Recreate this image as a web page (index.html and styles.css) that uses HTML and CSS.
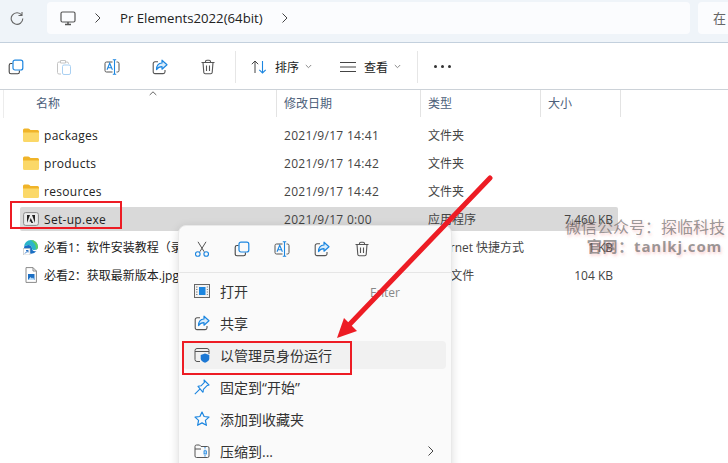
FILE: index.html
```html
<!DOCTYPE html>
<html lang="en">
<head>
    <meta charset="UTF-8">
    <meta name="viewport" content="width=device-width, initial-scale=1.0">
    <title>Pr Elements2022(64bit)</title>
    <link rel="stylesheet" href="styles.css">
</head>
<body>
    <svg class="defs" width="0" height="0">
        <symbol id="i-copy" viewBox="0 0 16 16">
            <path d="M4.500 4.500H3a1.800 1.800 0 0 0-1.800 1.800V13A1.800 1.800 0 0 0 3 14.800h6.600a1.800 1.800 0 0 0 1.800-1.800v-1.500" fill="none" stroke="#444" stroke-width="1.100"/>
            <rect x="5" y="1.200" width="9.800" height="9.800" rx="2" fill="none" stroke="#1c86e0" stroke-width="1.200"/>
        </symbol>
        <symbol id="i-rename" viewBox="0 0 16 16">
            <path d="M8.500 3H2.500A1.500 1.500 0 0 0 1 4.500v7A1.500 1.500 0 0 0 2.500 13H8.500M12.500 3h1A1.500 1.500 0 0 1 15 4.500v7a1.500 1.500 0 0 1-1.500 1.500h-1" fill="none" stroke="#555" stroke-width="1"/>
            <path d="M10.500 .7v14.600M8.800 .7h3.400M8.800 15.300h3.400M3 10.800l2.700-6.600 2.700 6.600M3.900 8.800h3.600" fill="none" stroke="#1c86e0" stroke-width="1.100"/>
        </symbol>
        <symbol id="i-share" viewBox="0 0 16 16">
            <path d="M6 2.800H3A1.800 1.800 0 0 0 1.200 4.600v8.200A1.800 1.800 0 0 0 3 14.600h8.200a1.800 1.800 0 0 0 1.800-1.800V11" fill="none" stroke="#555" stroke-width="1.100"/>
            <path d="M10 1.200l5 4.500-5 4.500V7.600c-2.600 0-4.300 1-5.500 3 0-3.800 2.200-6.400 5.500-6.600z" fill="#d8ecfb" stroke="#1c86e0" stroke-width="1.200" stroke-linejoin="round"/>
        </symbol>
        <symbol id="i-delete" viewBox="0 0 16 16">
            <path d="M1.500 3.500h13M5.500 3.500V2.600A1.400 1.400 0 0 1 6.900 1.200h2.200a1.400 1.400 0 0 1 1.400 1.400v.9M3 3.500l.8 10a1.500 1.500 0 0 0 1.500 1.300h5.400a1.500 1.500 0 0 0 1.500-1.300l.8-10M6.500 6.500v5.500M9.500 6.500v5.500" fill="none" stroke="#555" stroke-width="1.100"/>
        </symbol>
        <symbol id="i-folder" viewBox="0 0 16 14">
            <path d="M0 2a1.500 1.500 0 0 1 1.500-1.500h3.700c.5 0 .9.200 1.200.5L7.500 2H14.500A1.500 1.500 0 0 1 16 3.500V5H0z" fill="#f0b429"/>
            <path d="M0 4.500h16v8A1.500 1.500 0 0 1 14.500 14h-13A1.500 1.500 0 0 1 0 12.500z" fill="#fbd868"/>
        </symbol>
        <symbol id="i-chev" viewBox="0 0 8 12">
            <path d="M1.500 1.500L6 6l-4.500 4.500" fill="none" stroke="#444" stroke-width="1"/>
        </symbol>
    </svg>

    <div class="topbar">
        <svg class="refresh" width="14" height="14" viewBox="0 0 14 14"><path d="M11.800 4.300A5.800 5.800 0 1 0 12.800 7.500M12 1v3.500H8.500" fill="none" stroke="#666" stroke-width="1.100"/></svg>
        <div class="address">
            <svg width="16" height="15" viewBox="0 0 16 15"><rect x="1" y="1" width="14" height="10" rx="1.500" fill="none" stroke="#555" stroke-width="1.200"/><path d="M5 13.500h6M8 11v2.500" stroke="#555" stroke-width="1.500"/></svg>
            <svg class="crumb-sep" width="8" height="12"><use href="#i-chev"/></svg>
            <span class="crumb">Pr Elements2022(64bit)</span>
            <svg class="crumb-sep" width="8" height="12"><use href="#i-chev"/></svg>
        </div>
        <div class="search">在</div>
    </div>

    <div class="toolbar">
        <svg class="tool" width="16" height="16"><use href="#i-copy"/></svg>
        <svg class="tool paste" width="16" height="16" viewBox="0 0 16 16"><path d="M4 3H3a1.500 1.500 0 0 0-1.500 1.500v9A1.500 1.500 0 0 0 3 15h2M10 3h1a1.500 1.500 0 0 1 1.500 1.500V5M4.500 1.500h5V4h-5z" fill="none" stroke="#c4c4c4" stroke-width="1"/><rect x="6.500" y="6" width="8" height="9.500" rx="1.500" fill="none" stroke="#a9d0f2" stroke-width="1"/></svg>
        <svg class="tool" width="16" height="16"><use href="#i-rename"/></svg>
        <svg class="tool" width="16" height="16"><use href="#i-share"/></svg>
        <svg class="tool" width="16" height="16"><use href="#i-delete"/></svg>
        <span class="tool-sep"></span>
        <div class="tool-text sort">
            <svg width="16" height="14" viewBox="0 0 16 14"><path d="M4 13V1M.8 4.200L4 1l3.200 3.200" fill="none" stroke="#444" stroke-width="1"/><path d="M11.500 1v12M8.300 9.800l3.200 3.200 3.200-3.200" fill="none" stroke="#1c86e0" stroke-width="1.100"/></svg>
            <span>排序</span>
            <svg class="caret" width="7" height="5" viewBox="0 0 7 5"><path d="M.8 1l2.700 2.700L6.200 1" fill="none" stroke="#888"/></svg>
        </div>
        <div class="tool-text view">
            <svg width="16" height="10" viewBox="0 0 16 10"><path d="M0 .5h16M0 5h16M0 9.500h16" stroke="#444"/></svg>
            <span>查看</span>
            <svg class="caret" width="7" height="5" viewBox="0 0 7 5"><path d="M.8 1l2.700 2.700L6.200 1" fill="none" stroke="#888"/></svg>
        </div>
        <span class="tool-sep after-view"></span>
        <div class="more"><i></i><i></i><i></i></div>
    </div>

    <div class="list-head">
        <svg class="sort-up" width="8" height="5" viewBox="0 0 8 5"><path d="M.7 4L4 .8 7.300 4" fill="none" stroke="#666"/></svg>
        <div class="col col-name">名称</div>
        <div class="col col-date">修改日期</div>
        <div class="col col-type">类型</div>
        <div class="col col-size">大小</div>
    </div>

    <div class="rows">
        <div class="row">
            <div class="name latin"><svg class="file-icon" width="16" height="14"><use href="#i-folder"/></svg>packages</div>
            <div class="latin">2021/9/17 14:41</div><div>文件夹</div><div class="size"></div>
        </div>
        <div class="row">
            <div class="name latin"><svg class="file-icon" width="16" height="14"><use href="#i-folder"/></svg>products</div>
            <div class="latin">2021/9/17 14:42</div><div>文件夹</div><div class="size"></div>
        </div>
        <div class="row">
            <div class="name latin"><svg class="file-icon" width="16" height="14"><use href="#i-folder"/></svg>resources</div>
            <div class="latin">2021/9/17 14:42</div><div>文件夹</div><div class="size"></div>
        </div>
        <div class="row selected">
            <div class="name latin"><svg class="file-icon" width="16" height="14" viewBox="0 0 16 14"><rect x=".6" y=".6" width="14.800" height="12.800" rx="2" fill="#ececec" stroke="#8a8a8a"/><path d="M4 3H7L4 11zM9 3H12V11zM7.700 6L10.200 11H8.400L7.700 9.400H6.500z" fill="#222"/></svg>Set-up.exe</div>
            <div class="latin">2021/9/17 0:00</div><div>应用程序</div><div class="size">7,460 KB</div>
        </div>
        <div class="row">
            <div class="name"><svg class="file-icon" width="16" height="16" viewBox="0 0 16 16"><path d="M1 8a7 7 0 0 1 14 0c0 2-1.500 3-3.500 3-1.500 0-2.500-.5-2.500-1.500 0-2.500-2-3.500-3.500-3.500C3.500 6 1.500 7 1 8z" fill="#2bb5c9"/><path d="M1 8c.5-1 2.500-2 4.500-2 1.500 0 3.500 1 3.500 3.500 0 2 2 3.500 4.500 2.500A7 7 0 0 1 1 8z" fill="#1a6fc4"/><path d="M8 1a7 7 0 0 1 7 7c0 1.500-1 2.500-2.500 2.800C14 7 11 3.500 8 1z" fill="#5fce5f"/><rect x=".5" y="9.500" width="6.500" height="6.500" fill="#fff" stroke="#bbb" stroke-width=".6"/><path d="M2 14.500l3-3M3 11.500h2v2" fill="none" stroke="#1565c0" stroke-width=".9"/></svg>必看1&#xFF1A;软件安装教程&#xFF08;录屏&#xFF09;.url</div>
            <div class="latin">2021/9/17 0:00</div><div>Internet 快捷方式</div><div class="size">1 KB</div>
        </div>
        <div class="row">
            <div class="name"><svg class="file-icon" width="16" height="16" viewBox="0 0 16 16"><path d="M3 .6h7l3.400 3.400v11.400H3z" fill="#fff" stroke="#8a8a8a"/><path d="M10 .6V4h3.400" fill="none" stroke="#8a8a8a"/><rect x="5" y="7" width="6.500" height="6" fill="#1c6fc4"/><path d="M5 13l2.500-3 1.500 1.500 1-1 1.500 2.500z" fill="#bfe0fa"/></svg>必看2&#xFF1A;获取最新版本.jpg</div>
            <div class="latin">2021/9/17 0:00</div><div>JPG 文件</div><div class="size">104 KB</div>
        </div>
    </div>

    <div class="menu">
        <div class="menu-tools">
            <svg width="16" height="16" viewBox="0 0 16 16"><path d="M4 .8l6.200 10M12 .8L5.800 10.800" fill="none" stroke="#555" stroke-width="1"/><circle cx="3.800" cy="13" r="2.300" fill="none" stroke="#1c86e0" stroke-width="1.100"/><circle cx="12.200" cy="13" r="2.300" fill="none" stroke="#1c86e0" stroke-width="1.100"/></svg>
            <svg width="16" height="16"><use href="#i-copy"/></svg>
            <svg width="16" height="16"><use href="#i-rename"/></svg>
            <svg width="16" height="16"><use href="#i-share"/></svg>
            <svg width="16" height="16"><use href="#i-delete"/></svg>
        </div>
        <div class="menu-items">
            <div class="item">
                <svg width="16" height="14" viewBox="0 0 16 14"><rect x=".5" y=".5" width="15" height="13" fill="#f3f3f3" stroke="#666"/><rect x="5" y="3" width="6.500" height="8" fill="#1c86e0"/><path d="M2 3h1.500M2 5.500h1.500M2 8h1.500M2 10.500h1.500M12.800 3h1.200M12.800 5.500h1.200M12.800 8h1.200M12.800 10.500h1.200" stroke="#888"/></svg>
                <span class="label">打开</span><span class="hint">Enter</span>
            </div>
            <div class="item">
                <svg width="16" height="16"><use href="#i-share"/></svg>
                <span class="label">共享</span>
            </div>
            <div class="item hover">
                <svg width="16" height="16" viewBox="0 0 16 16"><path d="M6 14.500H3a2 2 0 0 1-2-2V3.500a2 2 0 0 1 2-2h10a2 2 0 0 1 2 2V7M1 4.500h14" fill="none" stroke="#555" stroke-width="1"/><path d="M11 6.500l4.300 1.500v3.500c0 2-1.800 3.500-4.300 4.300-2.500-.8-4.300-2.300-4.300-4.300V8z" fill="#1c78d4"/></svg>
                <span class="label">以管理员身份运行</span>
            </div>
            <div class="item">
                <svg width="16" height="16" viewBox="0 0 16 16"><path d="M10 1l5 5-2.200.8-3.400 3.500-.4 3L4 7.300l3-.5 3.400-3.400zM5.800 10.200L.8 15.200" fill="none" stroke="#1c86e0" stroke-width="1.100" stroke-linejoin="round"/></svg>
                <span class="label">固定到“开始”</span>
            </div>
            <div class="item">
                <svg width="16" height="16" viewBox="0 0 16 16"><path d="M8 1l2.100 4.500 4.900.6-3.600 3.300 1 4.900L8 11.900l-4.400 2.400 1-4.900L1 6.100l4.900-.6z" fill="none" stroke="#1c86e0" stroke-width="1.200" stroke-linejoin="round"/></svg>
                <span class="label">添加到收藏夹</span>
            </div>
            <div class="item">
                <svg width="16" height="16" viewBox="0 0 16 16"><path d="M1 3.500A1.500 1.500 0 0 1 2.500 2h3L7 3.500h6.500A1.500 1.500 0 0 1 15 5v8a1.500 1.500 0 0 1-1.500 1.500h-11A1.500 1.500 0 0 1 1 13zM1 6h6" fill="none" stroke="#555" stroke-width="1"/><path d="M11 4v10.500" stroke="#1c86e0" stroke-width="1" stroke-dasharray="1.500 1.200"/><rect x="10" y="8" width="2.500" height="3" fill="none" stroke="#1c86e0" stroke-width=".8"/></svg>
                <span class="label">压缩到...</span>
                <svg class="item-chev" width="8" height="12"><use href="#i-chev"/></svg>
            </div>
        </div>
    </div>

    <div class="watermark">
        <div>微信公众号&#xFF1A;探临科技</div>
        <div class="site">官网&#xFF1A;tanlkj.com</div>
    </div>

    <div class="mark mark-file"></div>
    <div class="mark mark-admin"></div>
    <svg class="arrow" width="728" height="463" viewBox="0 0 728 463">
        <path d="M490 178L349 325" stroke="#ed1c24" stroke-width="5" stroke-linecap="round" fill="none"/>
        <path d="M337 338L344 318 357 331z" fill="#ed1c24"/>
    </svg>
</body>
</html>
```

FILE: styles.css
```css
html, body {
    margin: 0;
    height: 100%;
}
body {
    position: relative;
    width: 728px;
    height: 463px;
    overflow: hidden;
    background: #fff;
    font-family: "Open Sans", "Noto Sans CJK SC", sans-serif;
    font-size: 12px;
    color: #222;
}
.defs {
    position: absolute;
}
svg {
    display: block;
    flex: none;
}

.topbar {
    display: flex;
    align-items: flex-start;
    height: 43px;
    padding-top: 2px;
    box-sizing: border-box;
    background: #eff4f9;
    border-bottom: 1px solid #c3d0dd;
}
.refresh {
    margin: 9px 23px 0 10px;
}
.address {
    display: flex;
    align-items: center;
    width: 643px;
    height: 32px;
    padding-left: 13px;
    box-sizing: border-box;
    background: #fbfcfe;
    border-radius: 4px;
    flex: none;
}
.crumb-sep {
    margin-left: 18px;
    margin-right: 18px;
}
.crumb {
    font-size: 13.200px;
    color: #222;
}
.search {
    flex: none;
    width: 60px;
    height: 32px;
    margin-left: 8px;
    padding-left: 15px;
    box-sizing: border-box;
    background: #fbfcfe;
    border-radius: 4px;
    font-size: 13px;
    line-height: 32px;
    color: #666;
}

.toolbar {
    display: flex;
    align-items: center;
    height: 47px;
    padding-top: 1px;
    padding-left: 8px;
    box-sizing: border-box;
    border-bottom: 1px solid #ccd2d8;
}
.tool {
    margin-right: 32px;
}
.tool-sep {
    width: 1px;
    height: 32px;
    margin-left: -13px;
    background: #e6e6e6;
}
.tool-sep.after-view {
    margin-left: 16px;
}
.tool-text {
    display: flex;
    align-items: center;
    font-size: 12px;
}
.tool-text span {
    margin-left: 8px;
    margin-right: 6px;
}
.sort {
    margin-left: 15px;
}
.view {
    margin-left: 28px;
}
.more {
    display: flex;
    gap: 4px;
    margin-left: 16px;
}
.more i {
    width: 3px;
    height: 3px;
    border-radius: 50%;
    background: #333;
}

.list-head {
    position: relative;
    display: grid;
    grid-template-columns: 277px 144px 120px 80px;
    height: 28px;
}
.list-head::before {
    content: "";
    position: absolute;
    left: 3px;
    top: 0;
    bottom: 0;
    width: 1px;
    background: #ececec;
}
.sort-up {
    position: absolute;
    left: 149px;
    top: 1px;
}
.col {
    padding-top: 4px;
    box-sizing: border-box;
    color: #4c607a;
    border-right: 1px solid #e3e3e3;
    height: 27px;
    padding-left: 7px;
}
.col-name {
    padding-left: 36px;
}

.rows {
    display: flex;
    flex-direction: column;
    gap: 4px;
    margin: 5px 0 0 20px;
    width: 598px;
}
.row {
    display: grid;
    grid-template-columns: 264px 144px 120px 70px;
    align-items: center;
    height: 24px;
    border-radius: 2px;
    color: #444;
}
.row .name {
    display: flex;
    align-items: center;
    color: #222;
    white-space: nowrap;
    overflow: hidden;
}
.latin {
    letter-spacing: 0.3px;
}
.row.selected {
    background: #d9d9d9;
}
.file-icon {
    margin-left: 3px;
    margin-right: 5px;
}
.size {
    padding-right: 5px;
    text-align: right;
}

.menu {
    position: absolute;
    left: 178px;
    top: 225px;
    width: 274px;
    height: 260px;
    background: #fafafa;
    border: 1px solid #e9e9e9;
    border-radius: 8px;
    box-sizing: border-box;
    box-shadow: 0 2px 10px rgba(0, 0, 0, 0.14);
    color: #333;
}
.menu-tools {
    display: flex;
    align-items: center;
    gap: 24px;
    height: 46px;
    padding-left: 15px;
    border-bottom: 1px solid #e6e6e6;
}
.menu-items {
    display: flex;
    flex-direction: column;
    padding: 2px 5px 0 4px;
}
.item {
    display: flex;
    align-items: center;
    height: 28px;
    margin-top: 4.200px;
    padding-left: 11px;
    border-radius: 4px;
    font-size: 14px;
}
.item:first-child {
    margin-top: 1.500px;
}
.item.hover {
    background: #f1f1f1;
}
.label {
    margin-left: 10px;
}
.hint {
    margin-left: 122px;
    margin-top: 3px;
    font-size: 12px;
    color: #888;
}
.item-chev {
    margin-left: auto;
    margin-right: 11px;
}

.watermark {
    position: absolute;
    right: 3px;
    top: 217px;
    text-align: right;
    font-size: 16px;
    line-height: 20px;
    color: rgba(90, 90, 90, 0.62);
    text-shadow: 1px 2px 3px rgba(240, 120, 120, 0.35);
}
.watermark .site {
    padding-right: 3px;
    font-weight: 700;
    font-size: 15px;
    line-height: 18px;
    letter-spacing: 0.8px;
}

.mark {
    position: absolute;
    box-sizing: border-box;
    border: 2px solid #ed1c24;
}
.mark-file {
    left: 10px;
    top: 201px;
    width: 112px;
    height: 28px;
}
.mark-admin {
    left: 182px;
    top: 341px;
    width: 170px;
    height: 34px;
}
.arrow {
    position: absolute;
    left: 0;
    top: 0;
}
```
